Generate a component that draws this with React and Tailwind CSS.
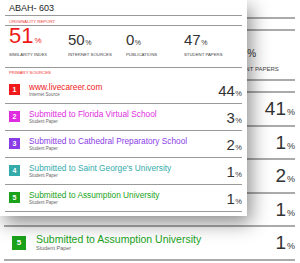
import React from "react";

const font = "font-['Liberation_Sans',Arial,Helvetica,sans-serif]";

const fgRows = [
  { n: 1, name: "www.livecareer.com", sub: "Internet Source", pct: "44", sq: "bg-[#f01a1a]", tx: "text-[#f01a1a]" },
  { n: 2, name: "Submitted to Florida Virtual School", sub: "Student Paper", pct: "3", sq: "bg-[#e02ce0]", tx: "text-[#e02ce0]" },
  { n: 3, name: "Submitted to Cathedral Preparatory School", sub: "Student Paper", pct: "2", sq: "bg-[#8a3de6]", tx: "text-[#8a3de6]" },
  { n: 4, name: "Submitted to Saint George's University", sub: "Student Paper", pct: "1", sq: "bg-[#33abab]", tx: "text-[#33abab]" },
  { n: 5, name: "Submitted to Assumption University", sub: "Student Paper", pct: "1", sq: "bg-[#1aa31a]", tx: "text-[#1aa31a]" },
];

const bgRows = [
  { n: 1, pct: "41" },
  { n: 2, pct: "1" },
  { n: 3, pct: "2" },
  { n: 4, pct: "1" },
  { n: 5, pct: "1", name: "Submitted to Assumption University", sub: "Student Paper", sq: "bg-[#1aa31a]", tx: "text-[#1aa31a]" },
];

const fgStats = [
  { v: "51", l: "SIMILARITY INDEX", big: true },
  { v: "50", l: "INTERNET SOURCES" },
  { v: "0", l: "PUBLICATIONS" },
  { v: "47", l: "STUDENT PAPERS" },
];

function Background() {
  return (
    <div className="flex flex-col px-[4px] pr-[5px]">
      <div className="h-[19px] border-b-2 border-[#aaa]" />
      <div className="h-[12px] border-b-2 border-[#aaa]" />
      <div className="h-[50px] border-b-2 border-[#aaa] pl-[8px] flex">
        <div className="w-[213px]" />
        <div className="pt-[10px] flex flex-col">
          <div className="flex items-baseline leading-[19px] text-[#333]">
            <span className="text-[19px]">47</span>
            <span className="text-[10px] ml-[1px]">%</span>
          </div>
          <div className="mt-[3px] text-[6px] leading-[7px] text-[#444] whitespace-nowrap">STUDENT PAPERS</div>
        </div>
      </div>
      <div className="h-[12px] border-b-2 border-[#aaa]" />
      {bgRows.map((r) => (
        <div key={r.n} className="h-[33.5px] border-b-2 border-[#aaa] flex items-center pl-[8px]">
          {r.name && (
            <>
              <div className={`w-[14px] h-[14px] ${r.sq} text-white text-[8px] font-bold flex items-center justify-center`}>
                {r.n}
              </div>
              <div className="ml-[10px] flex flex-col">
                <div className={`text-[10.5px] leading-[11px] whitespace-nowrap ${r.tx}`}>{r.name}</div>
                <div className="text-[5.5px] leading-[7px] text-[#666]">{r.sub}</div>
              </div>
            </>
          )}
          <div className="ml-auto flex items-baseline text-[#333] leading-none">
            <span className="text-[19px]">{r.pct}</span>
            <span className="text-[9px] ml-[1px]">%</span>
          </div>
        </div>
      ))}
    </div>
  );
}

function Card() {
  return (
    <div className="absolute left-0 top-0 w-[247px] h-[216px] bg-white px-[5px] shadow-[4px_7px_18px_rgba(0,0,0,0.45)] flex flex-col">
      <div className="h-[16px] border-b border-[#999] pl-[4px] pt-[3.5px] text-[9px] leading-[9px] text-[#222]">
        ABAH- 603
      </div>
      <div className="h-[10px] border-b border-[#999] pl-[4px] pt-[2.5px] text-[4.3px] leading-[5px] text-[#e33] whitespace-nowrap">
        ORIGINALITY REPORT
      </div>
      <div className="h-[42px] border-b border-[#999] pl-[4px] flex">
        {fgStats.map((s, i) => (
          <div key={s.l} className={`${i === 0 ? "w-[60px]" : "w-[59px]"} flex flex-col`}>
            <div className="h-[21px] flex items-end">
              <div className={`flex items-baseline leading-none ${s.big ? "text-[#f01a1a]" : "text-[#333]"}`}>
                <span className={s.big ? "text-[22px]" : "text-[15px]"}>{s.v}</span>
                <span className={s.big ? "text-[8px] ml-[1px]" : "text-[7px] ml-[0.5px]"}>%</span>
              </div>
            </div>
            <div className="mt-[5px] text-[4.3px] leading-[5px] text-[#444] whitespace-nowrap">{s.l}</div>
          </div>
        ))}
      </div>
      <div className="h-[9px] pl-[4px] pt-[1.5px] text-[4.3px] leading-[5px] text-[#e33] whitespace-nowrap">
        PRIMARY SOURCES
      </div>
      {fgRows.map((r) => (
        <div key={r.n} className="h-[27px] shrink-0 border-b border-[#999] flex items-start pt-[6px] pl-[4px]">
          <div className={`mt-[1px] w-[11px] h-[11px] ${r.sq} text-white text-[7px] font-bold leading-none flex items-center justify-center`}>
            {r.n}
          </div>
          <div className="ml-[9px] flex flex-col">
            <div className={`text-[8.3px] leading-[9px] whitespace-nowrap ${r.tx}`}>{r.name}</div>
            <div className="text-[4.5px] leading-[6px] text-[#666] whitespace-nowrap">{r.sub}</div>
          </div>
          <div className="ml-auto flex items-baseline text-[#333] leading-none">
            <span className="text-[15px]">{r.pct}</span>
            <span className="text-[7.5px] ml-[0.5px]">%</span>
          </div>
        </div>
      ))}
    </div>
  );
}

export default function App() {
  return (
    <div className={`relative w-[300px] h-[263px] overflow-hidden bg-white ${font}`}>
      <Background />
      <Card />
    </div>
  );
}
